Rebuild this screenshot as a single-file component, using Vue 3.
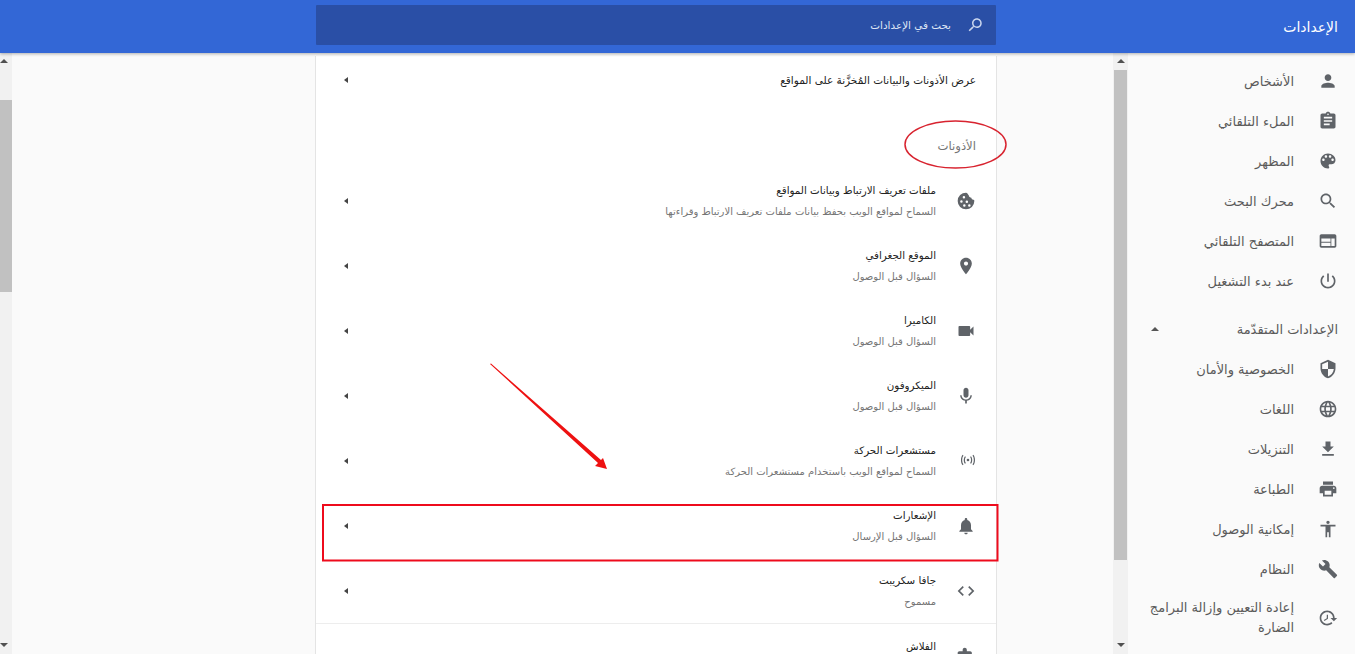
<script setup>
const P = {
  person: 'M12 12c2.21 0 4-1.79 4-4s-1.79-4-4-4-4 1.79-4 4 1.79 4 4 4zm0 2c-2.67 0-8 1.34-8 4v2h16v-2c0-2.66-5.33-4-8-4z',
  assign: 'M19 3h-4.18C14.4 1.84 13.3 1 12 1c-1.3 0-2.4.84-2.82 2H5c-1.1 0-2 .9-2 2v14c0 1.1.9 2 2 2h14c1.1 0 2-.9 2-2V5c0-1.1-.9-2-2-2zm-7 0c.55 0 1 .45 1 1s-.45 1-1 1-1-.45-1-1 .45-1 1-1zm2 14H7v-2h7v2zm3-4H7v-2h10v2zm0-4H7V7h10v2z',
  palette: 'M12 3c-4.97 0-9 4.03-9 9s4.03 9 9 9c.83 0 1.5-.67 1.5-1.5 0-.39-.15-.74-.39-1.01-.23-.26-.38-.61-.38-.99 0-.83.67-1.5 1.5-1.5H16c2.76 0 5-2.24 5-5 0-4.42-4.03-8-9-8zm-5.5 9c-.83 0-1.5-.67-1.5-1.5S5.67 9 6.5 9 8 9.67 8 10.5 7.33 12 6.5 12zm3-4C8.67 8 8 7.33 8 6.5S8.67 5 9.5 5s1.5.67 1.5 1.5S10.33 8 9.5 8zm5 0c-.83 0-1.5-.67-1.5-1.5S13.67 5 14.5 5s1.5.67 1.5 1.5S15.33 8 14.5 8zm3 4c-.83 0-1.5-.67-1.5-1.5S16.67 9 17.5 9s1.5.67 1.5 1.5-.67 1.5-1.5 1.5z',
  search: 'M15.5 14h-.79l-.28-.27C15.41 12.59 16 11.11 16 9.5 16 5.91 13.09 3 9.5 3S3 5.91 3 9.5 5.91 16 9.5 16c1.61 0 3.09-.59 4.23-1.57l.27.28v.79l5 4.99L20.49 19l-4.99-5zm-6 0C7.01 14 5 11.99 5 9.5S7.01 5 9.5 5 14 7.01 14 9.5 11.99 14 9.5 14z',
  web: 'M20 4H4c-1.1 0-1.99.9-1.99 2L2 18c0 1.1.9 2 2 2h16c1.1 0 2-.9 2-2V6c0-1.1-.9-2-2-2zM4 9h11v4H4V9zm0 5h11v4H4v-4zm16 4h-4V9h4v9z',
  power: 'M13 3h-2v10h2V3zm4.83 2.17l-1.42 1.42C17.99 7.86 19 9.81 19 12c0 3.87-3.13 7-7 7s-7-3.13-7-7c0-2.19 1.01-4.14 2.58-5.42L6.17 5.17C4.23 6.82 3 9.26 3 12c0 4.97 4.03 9 9 9s9-4.03 9-9c0-2.74-1.23-5.18-3.17-6.83z',
  shield: 'M12 1L3 5v6c0 5.55 3.84 10.74 9 12 5.16-1.26 9-6.45 9-12V5l-9-4zm0 10.99h7c-.53 4.12-3.28 7.79-7 8.94V12H5V6.3l7-3.11v8.8z',
  globe: 'M11.99 2C6.47 2 2 6.48 2 12s4.47 10 9.99 10C17.52 22 22 17.52 22 12S17.52 2 11.99 2zm6.93 6h-2.95c-.32-1.25-.78-2.45-1.38-3.56 1.84.63 3.37 1.91 4.33 3.56zM12 4.04c.83 1.2 1.48 2.53 1.91 3.96h-3.82c.43-1.43 1.08-2.76 1.91-3.96zM4.26 14C4.1 13.36 4 12.69 4 12s.1-1.36.26-2h3.38c-.08.66-.14 1.32-.14 2 0 .68.06 1.34.14 2H4.26zm.82 2h2.95c.32 1.25.78 2.45 1.38 3.56-1.84-.63-3.37-1.9-4.33-3.56zm2.95-8H5.08c.96-1.66 2.49-2.93 4.33-3.56C8.81 5.55 8.35 6.75 8.03 8zM12 19.96c-.83-1.2-1.48-2.53-1.91-3.96h3.82c-.43 1.43-1.08 2.76-1.91 3.96zM14.34 14H9.66c-.09-.66-.16-1.32-.16-2 0-.68.07-1.35.16-2h4.68c.09.65.16 1.32.16 2 0 .68-.07 1.34-.16 2zm.25 5.56c.6-1.11 1.06-2.31 1.38-3.56h2.95c-.96 1.65-2.49 2.93-4.33 3.56zM16.36 14c.08-.66.14-1.32.14-2 0-.68-.06-1.34-.14-2h3.38c.16.64.26 1.31.26 2s-.1 1.36-.26 2h-3.38z',
  download: 'M19 9h-4V3H9v6H5l7 7 7-7zM5 18v2h14v-2H5z',
  print: 'M19 8H5c-1.66 0-3 1.34-3 3v6h4v4h12v-4h4v-6c0-1.66-1.34-3-3-3zm-3 11H8v-5h8v5zm3-7c-.55 0-1-.45-1-1s.45-1 1-1 1 .45 1 1-.45 1-1 1zm-1-9H6v4h12V3z',
  access: 'M12 2c1.1 0 2 .9 2 2s-.9 2-2 2-2-.9-2-2 .9-2 2-2zm9 7h-6v13h-2v-6h-2v6H9V9H3V7h18v2z',
  build: 'M22.7 19l-9.1-9.1c.9-2.3.4-5-1.5-6.9-2-2-5-2.4-7.4-1.3L9 6 6 9 1.6 4.7C.4 7.1.9 10.1 2.9 12.1c1.9 1.9 4.6 2.4 6.9 1.5l9.1 9.1c.4.4 1 .4 1.4 0l2.3-2.3c.5-.4.5-1.1.1-1.4z',
  restore: 'M13 3c-4.97 0-9 4.03-9 9H1l3.89 3.89.07.14L9 12H6c0-3.87 3.13-7 7-7s7 3.13 7 7-3.13 7-7 7c-1.93 0-3.68-.79-4.94-2.06l-1.42 1.42C8.27 19.99 10.51 21 13 21c4.97 0 9-4.03 9-9s-4.03-9-9-9zm-1 5v5l4.28 2.54.72-1.21-3.5-2.08V8h-1.5z',
  cookie: 'M12 2a10 10 0 1 0 10 10c0-1-.2-1.5-1-1.6-1.5-.1-2.4-1-2.6-2.4-1.6 0-2.8-1-3-2.6C14.600 4 13.500 2 12 2zM9.500 6a1.500 1.500 0 1 1 0 3 1.500 1.500 0 0 1 0-3zm-3 5a1.500 1.500 0 1 1 0 3 1.500 1.500 0 0 1 0-3zm6.500.5a1.500 1.500 0 1 1 0 3 1.500 1.500 0 0 1 0-3zM10 16a1.500 1.500 0 1 1 0 3 1.500 1.500 0 0 1 0-3zm6 0a1.500 1.500 0 1 1 0 3 1.500 1.500 0 0 1 0-3z',
  pin: 'M12 2C8.130 2 5 5.130 5 9c0 5.250 7 13 7 13s7-7.750 7-13c0-3.870-3.130-7-7-7zm0 9.500c-1.380 0-2.500-1.120-2.500-2.500s1.120-2.500 2.500-2.500 2.500 1.120 2.500 2.500-1.120 2.500-2.500 2.500z',
  video: 'M17 10.500V7c0-.55-.45-1-1-1H4c-.55 0-1 .45-1 1v10c0 .55.45 1 1 1h12c.55 0 1-.45 1-1v-3.500l4 4v-11l-4 4z',
  mic: 'M12 14c1.660 0 2.990-1.340 2.990-3L15 5c0-1.660-1.340-3-3-3S9 3.340 9 5v6c0 1.660 1.340 3 3 3zm5.300-3c0 3-2.540 5.100-5.300 5.100S6.700 14 6.700 11H5c0 3.410 2.720 6.230 6 6.720V21h2v-3.280c3.280-.48 6-3.300 6-6.720h-1.700z',
  sensors: 'M12 10a2 2 0 1 0 0 4 2 2 0 0 0 0-4zM8.800 7.500 7.600 6.300C5 8.700 5 15.300 7.600 17.700l1.200-1.200C7 14.700 7 9.300 8.800 7.500zm6.400 0c1.800 1.800 1.800 7.200 0 9l1.200 1.200c2.600-2.400 2.600-9 0-11.400l-1.200 1.200zM5.200 5.200 4 4C.6 8 .6 16 4 20l1.200-1.200C2.600 15.500 2.600 8.500 5.200 5.200zm13.600 0c2.600 3.300 2.600 10.300 0 13.600L20 20c3.400-4 3.400-12 0-16l-1.200 1.200z',
  bell: 'M12 22c1.100 0 2-.9 2-2h-4c0 1.100.9 2 2 2zm6-6v-5c0-3.070-1.630-5.640-4.500-6.320V4c0-.83-.67-1.500-1.500-1.500s-1.500.67-1.500 1.500v.68C7.640 5.360 6 7.920 6 11v5l-2 2v1h16v-1l-2-2z',
  code: 'M9.400 16.600L4.800 12l4.600-4.600L8 6l-6 6 6 6 1.400-1.400zm5.200 0l4.600-4.600-4.600-4.600L16 6l6 6-6 6-1.400-1.400z',
  ext: 'M20.500 11H19V7c0-1.100-.9-2-2-2h-4V3.500C13 2.120 11.880 1 10.500 1S8 2.120 8 3.500V5H4c-1.100 0-1.990.9-1.990 2v3.800H3.500c1.490 0 2.700 1.210 2.700 2.700s-1.210 2.700-2.700 2.700H2V20c0 1.100.9 2 2 2h3.800v-1.500c0-1.490 1.210-2.700 2.700-2.700 1.490 0 2.700 1.210 2.700 2.700V22H17c1.100 0 2-.9 2-2v-4h1.500c1.380 0 2.500-1.120 2.500-2.500S21.880 11 20.500 11z'
}
const navTop = [
  ['الأشخاص', P.person], ['الملء التلقائي', P.assign], ['المظهر', P.palette],
  ['محرك البحث', P.search], ['المتصفح التلقائي', P.web], ['عند بدء التشغيل', P.power]
]
const navAdv = [
  ['الخصوصية والأمان', P.shield], ['اللغات', P.globe], ['التنزيلات', P.download],
  ['الطباعة', P.print], ['إمكانية الوصول', P.access], ['النظام', P.build]
]
const rows = [
  ['ملفات تعريف الارتباط وبيانات المواقع', 'السماح لمواقع الويب بحفظ بيانات ملفات تعريف الارتباط وقراءتها', P.cookie],
  ['الموقع الجغرافي', 'السؤال قبل الوصول', P.pin],
  ['الكاميرا', 'السؤال قبل الوصول', P.video],
  ['الميكروفون', 'السؤال قبل الوصول', P.mic],
  ['مستشعرات الحركة', 'السماح لمواقع الويب باستخدام مستشعرات الحركة', P.sensors],
  ['الإشعارات', 'السؤال قبل الإرسال', P.bell],
  ['جافا سكريبت', 'مسموح', P.code],
  ['الفلاش', '', P.ext]
]
</script>

<template>
  <div class="page" dir="rtl">
    <header class="top">
      <div class="brand">الإعدادات</div>
      <div class="searchbox">
        <svg class="searchicon" viewBox="0 0 24 24"><path :d="P.search" transform="matrix(-1 0 0 1 24 0)" /></svg>
        <span>بحث في الإعدادات</span>
      </div>
    </header>

    <div class="body">
      <aside class="side">
        <a v-for="n in navTop" :key="n[0]" class="nav">
          <svg class="navicon" viewBox="0 0 24 24"><path :d="n[1]" /></svg>
          <span>{{ n[0] }}</span>
        </a>
        <div class="adv">
          <span>الإعدادات المتقدّمة</span>
          <i class="caret-up"></i>
        </div>
        <a v-for="n in navAdv" :key="n[0]" class="nav">
          <svg class="navicon" viewBox="0 0 24 24"><path :d="n[1]" /></svg>
          <span>{{ n[0] }}</span>
        </a>
        <a class="nav reset">
          <svg class="navicon flip" viewBox="0 0 24 24"><path :d="P.restore" /></svg>
          <span>إعادة التعيين وإزالة البرامج الضارة</span>
        </a>
      </aside>

      <div class="bar barside">
        <i class="arrow-up"></i>
        <div class="thumb thumbside"></div>
        <i class="arrow-down"></i>
      </div>

      <main class="content">
        <section class="card">
          <div class="linkrow">
            <span class="title lead">عرض الأذونات والبيانات المُخزَّنة على المواقع</span>
            <i class="chev"></i>
          </div>
          <div class="heading">الأذونات</div>
          <div v-for="(r, i) in rows" :key="r[0]" class="row" :class="{ ruled: i === 6 }">
            <svg class="rowicon" :class="{ narrow: r[2] === P.sensors }" viewBox="0 0 24 24"><path :d="r[2]" /></svg>
            <div class="texts">
              <div class="title">{{ r[0] }}</div>
              <div class="sub">{{ r[1] }}</div>
            </div>
            <i class="chev"></i>
          </div>
        </section>
      </main>

      <div class="bar barleft">
        <i class="arrow-up"></i>
        <div class="thumb thumbleft"></div>
        <i class="arrow-down"></i>
      </div>
    </div>

    <svg class="marks" width="1355" height="654" viewBox="0 0 1355 654">
      <ellipse cx="955.500" cy="144.500" rx="50.500" ry="23.500" fill="none" stroke="#d8232f" stroke-width="1.500" />
      <polygon points="490,364 491,363.500 601,460 603,458 607,469 595,466 598,463" fill="#ee1111" />
      <rect x="323" y="505" width="674.500" height="55.500" fill="none" stroke="#ee0b1c" stroke-width="2" />
    </svg>
  </div>
</template>

<style>
html, body { margin: 0; overflow: hidden; }
</style>

<style scoped>
.page {
  position: relative;
  width: 1355px;
  height: 654px;
  overflow: hidden;
  background: #fafafa;
  font-family: "DejaVu Sans", "Noto Sans", sans-serif;
  font-size: 10px;
  color: #5f6368;
}
.top {
  height: 53px;
  display: flex;
  align-items: center;
  background: #3367d6;
  box-shadow: 0 1px 3px rgba(0, 0, 0, .3);
  position: relative;
  z-index: 2;
}
.brand {
  width: 342px;
  padding-right: 17px;
  color: #fff;
  font-size: 14px;
  font-weight: 500;
}
.searchbox {
  width: 680px;
  height: 40px;
  margin-top: -3px;
  display: flex;
  align-items: center;
  gap: 15px;
  padding-right: 12px;
  box-sizing: border-box;
  font-size: 10.400px;
  background: #2a4fa6;
  color: #dfe6f5;
  border-radius: 1px;
}
.searchicon { width: 18px; height: 18px; fill: #c9d5ee; }
.body {
  height: 601px;
  display: flex;
  overflow: hidden;
}
.side {
  width: 227px;
  flex: none;
  padding-top: 8px;
  box-sizing: border-box;
  font-size: 13px;
}
.nav {
  height: 40px;
  display: flex;
  align-items: center;
  gap: 24px;
  padding-right: 17px;
  color: #5a5a5a;
}
.navicon { width: 20px; height: 20px; flex: none; fill: #5f6368; }
.flip { transform: scaleX(-1); }
.adv {
  height: 48px;
  box-sizing: border-box;
  padding: 8px 17px 0 23px;
  display: flex;
  align-items: center;
  justify-content: space-between;
  color: #5a5a5a;
}
.caret-up {
  border: 4px solid transparent;
  border-top: 0;
  border-bottom: 4px solid #555;
}
.reset { height: 58px; padding-left: 8px; }
.reset span { line-height: 20px; }
.bar {
  display: flex;
  flex-direction: column;
  align-items: center;
  flex: none;
  background: #f1f1f1;
}
.barside { width: 15px; }
.barleft { width: 12px; align-items: flex-end; }
.thumb { width: 100%; background: #c1c1c1; }
.thumbside { width: 13px; height: 490px; margin-top: 7px; }
.thumbleft { height: 192px; margin-top: 37px; }
.arrow-up, .arrow-down {
  display: block;
  width: 0;
  height: 0;
  border-left: 4px solid transparent;
  border-right: 4px solid transparent;
}
.arrow-up { border-bottom: 4px solid #505050; margin-top: 6px; }
.arrow-down { border-top: 4px solid #505050; margin-top: auto; margin-bottom: 7px; }
.content {
  flex: 1;
  padding-right: 116px;
  padding-top: 3px;
  overflow: hidden;
}
.card {
  width: 682px;
  box-sizing: border-box;
  background: #fff;
  border-right: 1px solid #e4e4e4;
  border-left: 1px solid #e4e4e4;
}
.linkrow {
  height: 48px;
  display: flex;
  align-items: center;
  justify-content: space-between;
  padding: 0 20px 0 28px;
}
.heading {
  height: 64px;
  box-sizing: border-box;
  padding: 20px 20px 0 0;
  line-height: 45px;
  font-size: 11.700px;
  color: #757575;
}
.row {
  height: 65px;
  display: flex;
  align-items: center;
  gap: 20px;
  padding: 0 20px 0 28px;
  box-sizing: border-box;
}
.row.ruled { height: 66px; border-bottom: 1px solid #ededed; }
.rowicon { width: 20px; height: 20px; flex: none; fill: #5f6368; }
.rowicon.narrow { width: 16px; height: 16px; margin-left: 4px; margin-bottom: 2px; }
.texts { flex: 1; line-height: 21px; }
.title { color: #222; font-size: 10.300px; font-weight: 500; }
.lead { font-size: 10.500px; }
.sub { color: #757575; min-height: 21px; }
.chev {
  flex: none;
  border: 3.500px solid transparent;
  border-left: 0;
  border-right: 4px solid #444;
}
.marks {
  position: absolute;
  left: 0;
  top: 0;
  z-index: 3;
  pointer-events: none;
}
</style>
